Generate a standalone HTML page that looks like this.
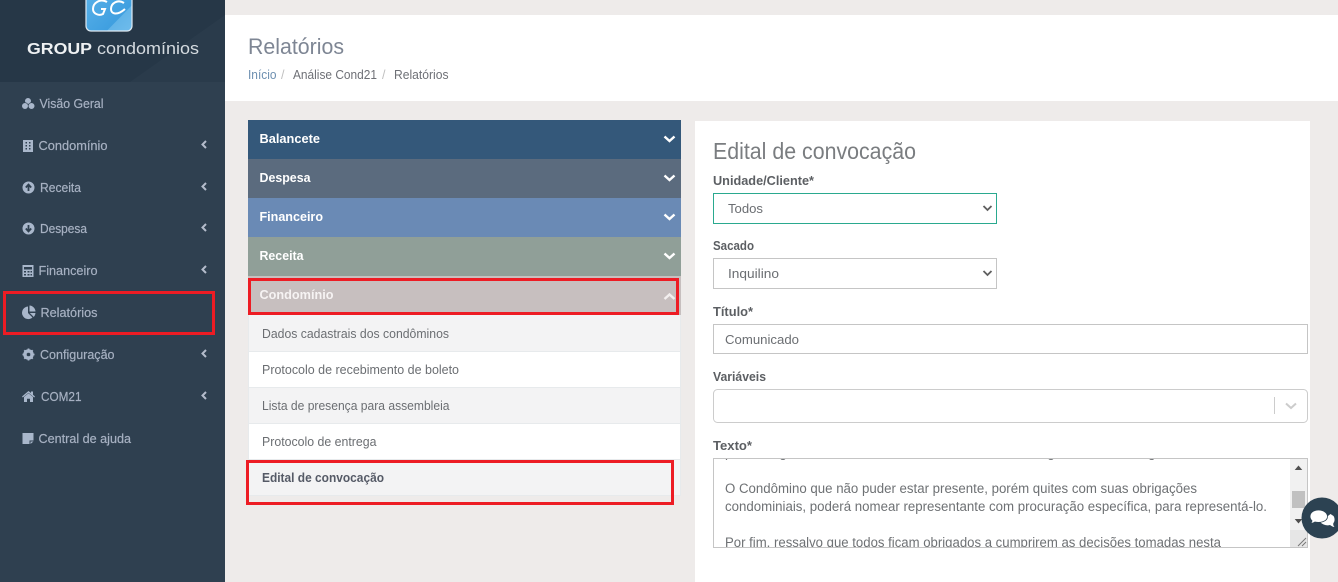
<!DOCTYPE html>
<html lang="pt-BR"><head><meta charset="utf-8"><title>Relatórios</title>
<style>
html,body{margin:0;padding:0;width:1338px;height:582px;overflow:hidden;background:#eeebea}
svg{display:block;position:absolute;left:0;top:0}
text{font-family:"Liberation Sans",sans-serif;font-size:13px;white-space:pre}
.s{fill:#a7b1c2;stroke:#a7b1c2;stroke-width:.2px;font-size:13px}
.h{fill:#fff;font-weight:bold;font-size:13px}
.l{fill:#6b6e72;font-size:13px}
.b{fill:#5c5f63;font-weight:bold;font-size:13px}
.t{fill:#6e7174;font-size:13.5px}
.i{fill:#a9b7cb}
.c{fill:none;stroke:#fff;stroke-width:2.4}
.sc{fill:none;stroke:#b4bccb;stroke-width:2}
.dc{fill:none;stroke:#5f5f5f;stroke-width:1.8}
</style></head><body>
<svg width="1338" height="582" viewBox="0 0 1338 582" xmlns="http://www.w3.org/2000/svg">
<defs>
<linearGradient id="lg" x1="0" y1="0" x2="1" y2="1"><stop offset="0" stop-color="#5db4ea"/><stop offset=".72" stop-color="#3f9fe0"/><stop offset=".73" stop-color="#62b4e8"/><stop offset="1" stop-color="#6fbcec"/></linearGradient>
<clipPath id="ta"><rect x="714" y="459" width="576" height="88"/></clipPath>
</defs>
<!-- sidebar -->
<rect x="0" y="0" width="225" height="582" fill="#2f4050"/>
<rect x="0" y="0" width="225" height="82" fill="#263747"/>
<path d="M130 82L225 15V82Z" fill="#2a3b4b"/>
<rect x="86" y="-16" width="46" height="47" rx="5" fill="url(#lg)" stroke="#dfeaf2" stroke-width="1.2"/>
<path d="M107 2C100-2 93 3 93 9c0 5 6 7 10 5l2-5h-4M124 3c-6-4-13 0-13 6 0 5 6 7 14 0" fill="none" stroke="#fff" stroke-width="2"/>
<text x="27" y="54" textLength="65" lengthAdjust="spacingAndGlyphs" style="font-size:16px;font-weight:bold;fill:#eef1f3">GROUP</text>
<text x="97" y="54" textLength="102" lengthAdjust="spacingAndGlyphs" style="font-size:16.5px;fill:#d5dbe0">condomínios</text>

<g class="i" stroke="#2f4050" stroke-width=".6"><circle cx="28" cy="101" r="3.300"/><circle cx="25" cy="106" r="3.300"/><circle cx="31.500" cy="106" r="3.300"/></g>
<text class="s" x="39.500" y="108" textLength="64" lengthAdjust="spacingAndGlyphs">Visão Geral</text>

<path class="i" d="M23 140h10v12h-10zM25.500 142v1.500h1.500v-1.500zM29 142v1.500h1.500v-1.500zM25.500 145v1.500h1.500v-1.500zM29 145v1.500h1.500v-1.500zM25.500 148v1.500h1.500v-1.500zM29 148v1.500h1.500v-1.500z" fill-rule="evenodd"/>
<text class="s" x="38.500" y="150" textLength="69" lengthAdjust="spacingAndGlyphs">Condomínio</text>

<circle class="i" cx="28.500" cy="187.500" r="6"/><path d="M28.500 191v-6M25.800 187.500l2.700-2.900 2.700 2.900" fill="none" stroke="#2f4050" stroke-width="1.800"/>
<text class="s" x="40" y="192" textLength="41" lengthAdjust="spacingAndGlyphs">Receita</text>

<circle class="i" cx="28.500" cy="228.500" r="6"/><path d="M28.500 225v6M25.800 228.500l2.700 2.900 2.700-2.900" fill="none" stroke="#2f4050" stroke-width="1.800"/>
<text class="s" x="40" y="233" textLength="47" lengthAdjust="spacingAndGlyphs">Despesa</text>

<path class="i" d="M22.500 265h11v12h-11zM24 267v2.500h8v-2.500zM24 271v1.500h2v-1.500zM27.500 271v1.500h2v-1.500zM30.500 271v1.500h1.500v-1.500zM24 274v1.500h2v-1.500zM27.500 274v1.500h2v-1.500zM30.500 274v1.500h1.500v-1.500z" fill-rule="evenodd"/>
<text class="s" x="38.500" y="275" textLength="59" lengthAdjust="spacingAndGlyphs">Financeiro</text>

<path class="i" d="M28 306.500v6.500l4.500 4.500a6.300 6.300 0 1 1-4.500-11zM29.500 305.500a6.500 6.500 0 0 1 6 6h-6zM29.800 313h5.700a6.500 6.500 0 0 1-1.700 4z"/>
<text class="s" x="40.500" y="317" textLength="57" lengthAdjust="spacingAndGlyphs">Relatórios</text>

<circle cx="28.500" cy="354.500" r="4" fill="none" stroke="#a9b7cb" stroke-width="2.600"/><path d="M28.500 348.500v12M22.500 354.500h12M24.300 350.300l8.400 8.400M32.700 350.300l-8.400 8.400" stroke="#a9b7cb" stroke-width="1.800"/><circle cx="28.500" cy="354.500" r="1.800" fill="#2f4050"/>
<text class="s" x="40" y="359" textLength="74.500" lengthAdjust="spacingAndGlyphs">Configuração</text>

<path class="i" d="M22 396.500l6.500-5.500 2.500 2v-1.500h2v3.200l2 1.800-.8 1-5.700-4.800-5.700 4.800zM24 397l4.500-3.700 4.500 3.700v5h-3v-3.200h-3v3.200h-3z"/>
<text class="s" x="41" y="401" textLength="40.500" lengthAdjust="spacingAndGlyphs">COM21</text>

<path class="i" d="M22.500 433h11v7.500h-4v3.500h-7zM30.500 444l3-2.500h-3z"/>
<text class="s" x="38.500" y="443" textLength="92.500" lengthAdjust="spacingAndGlyphs">Central de ajuda</text>

<path class="sc" d="M206 141l-3.500 3.500 3.500 3.500M206 183l-3.500 3.500 3.500 3.500M206 224l-3.500 3.500 3.500 3.500M206 266l-3.500 3.500 3.500 3.500M206 350l-3.500 3.500 3.500 3.500M206 392l-3.500 3.500 3.500 3.500"/>
<rect x="4.500" y="292.500" width="209" height="41" fill="none" stroke="#ed1c24" stroke-width="3"/>

<!-- top header -->
<rect x="225" y="15" width="1113" height="86" fill="#fff"/>
<text x="248" y="54" textLength="96" lengthAdjust="spacingAndGlyphs" style="font-size:22px;fill:#7e8694">Relatórios</text>
<text x="248" y="79" textLength="28.500" lengthAdjust="spacingAndGlyphs" style="fill:#6d8fb0;font-size:12.500px">Início</text>
<text x="281" y="79" style="fill:#c0c0c0;font-size:12.500px">/</text>
<text x="293" y="79" textLength="84" lengthAdjust="spacingAndGlyphs" style="fill:#6e7076;font-size:12.500px">Análise Cond21</text>
<text x="382" y="79" style="fill:#c0c0c0;font-size:12.500px">/</text>
<text x="394" y="79" textLength="54.500" lengthAdjust="spacingAndGlyphs" style="fill:#6e7076;font-size:12.500px">Relatórios</text>

<!-- accordion -->
<rect x="248" y="120" width="433" height="39" fill="#34587a"/>
<rect x="248" y="159" width="433" height="39" fill="#5b6b7e"/>
<rect x="248" y="198" width="433" height="39" fill="#6a8ab5"/>
<rect x="248" y="237" width="433" height="39" fill="#909f98"/>
<rect x="248" y="276" width="433" height="39" fill="#c7bfbf"/>
<text class="h" x="259.500" y="143" textLength="60.500" lengthAdjust="spacingAndGlyphs">Balancete</text>
<text class="h" x="259.500" y="182" textLength="51" lengthAdjust="spacingAndGlyphs">Despesa</text>
<text class="h" x="259.500" y="221" textLength="63.500" lengthAdjust="spacingAndGlyphs">Financeiro</text>
<text class="h" x="259.500" y="260" textLength="44" lengthAdjust="spacingAndGlyphs">Receita</text>
<text class="h" x="259.500" y="299" textLength="74" lengthAdjust="spacingAndGlyphs" style="fill:#f6f3f3">Condomínio</text>
<path class="c" d="M664.500 136.500l5 4.500 5-4.500M664.500 175.500l5 4.500 5-4.500M664.500 214.500l5 4.500 5-4.500M664.500 253.500l5 4.500 5-4.500"/>
<path class="c" style="stroke:#f3efef" d="M664.500 299l5-4.500 5 4.500"/>

<!-- list -->
<rect x="248.500" y="315" width="432" height="181" fill="#fff"/>
<rect x="249" y="315" width="431" height="36" fill="#f3f3f4"/>
<rect x="249" y="387.500" width="431" height="36" fill="#f3f3f4"/>
<rect x="249" y="460" width="431" height="36" fill="#f3f3f4"/>
<path d="M248.500 315v181M680.500 315v181M249 351.500h431M249 387.500h431M249 423.500h431M249 459.500h431M249 495.500h431" stroke="#e7eaec" fill="none"/>
<text class="l" x="262" y="338" textLength="187" lengthAdjust="spacingAndGlyphs">Dados cadastrais dos condôminos</text>
<text class="l" x="262" y="374" textLength="197" lengthAdjust="spacingAndGlyphs">Protocolo de recebimento de boleto</text>
<text class="l" x="262" y="410" textLength="187.500" lengthAdjust="spacingAndGlyphs">Lista de presença para assembleia</text>
<text class="l" x="262" y="446" textLength="114.500" lengthAdjust="spacingAndGlyphs">Protocolo de entrega</text>
<text x="262" y="482" textLength="122" lengthAdjust="spacingAndGlyphs" style="font-weight:bold;fill:#555a66">Edital de convocação</text>
<rect x="247.500" y="461.500" width="425" height="42" fill="none" stroke="#ed1c24" stroke-width="3"/>
<rect x="249.500" y="279.500" width="428" height="34" fill="none" stroke="#ed1c24" stroke-width="3"/>

<!-- form panel -->
<rect x="695" y="121" width="615" height="461" fill="#fff"/>
<text x="713" y="159" textLength="203" lengthAdjust="spacingAndGlyphs" style="font-size:23px;fill:#7a7d80">Edital de convocação</text>

<text class="b" x="713" y="185" textLength="101" lengthAdjust="spacingAndGlyphs">Unidade/Cliente*</text>
<rect x="713.500" y="193.500" width="283" height="30" fill="#fff" stroke="#2aa98f"/>
<text class="l" x="728" y="213" textLength="35" lengthAdjust="spacingAndGlyphs">Todos</text>
<path class="dc" d="M983.500 206l4 4 4-4"/>

<text class="b" x="713" y="250" textLength="41" lengthAdjust="spacingAndGlyphs">Sacado</text>
<rect x="713.500" y="258.500" width="283" height="30" fill="#fff" stroke="#c5c5c5"/>
<text class="l" x="728" y="278" textLength="51" lengthAdjust="spacingAndGlyphs">Inquilino</text>
<path class="dc" d="M983.500 271l4 4 4-4"/>

<text class="b" x="713" y="316" textLength="40" lengthAdjust="spacingAndGlyphs">Título*</text>
<rect x="713.500" y="324.500" width="594" height="29" fill="#fff" stroke="#c5c5c5"/>
<text class="l" x="725" y="344" textLength="74" lengthAdjust="spacingAndGlyphs">Comunicado</text>

<text class="b" x="713" y="381" textLength="53" lengthAdjust="spacingAndGlyphs">Variáveis</text>
<rect x="713.500" y="389.500" width="594" height="33" rx="4" fill="#fff" stroke="#cccccc"/>
<path d="M1274.500 397v17" stroke="#cccccc"/>
<path d="M1286 403.500l5 4.500 5-4.500" fill="none" stroke="#cccccc" stroke-width="2"/>

<text class="b" x="713" y="450" textLength="39" lengthAdjust="spacingAndGlyphs">Texto*</text>
<rect x="713.500" y="458.500" width="594" height="89" fill="#fff" stroke="#c5c5c5"/>
<g clip-path="url(#ta)">
<text class="t" y="457"><tspan x="725">pelo</tspan><tspan x="747" dy="0"> diálogo</tspan><tspan x="880">local,</tspan><tspan x="1033">segundo</tspan><tspan x="1130">longo</tspan></text>
<text class="t" x="725" y="493" textLength="472" lengthAdjust="spacingAndGlyphs">O Condômino que não puder estar presente, porém quites com suas obrigações</text>
<text class="t" x="725" y="511" textLength="542" lengthAdjust="spacingAndGlyphs">condominiais, poderá nomear representante com procuração específica, para representá-lo.</text>
<text class="t" x="725" y="547" textLength="496" lengthAdjust="spacingAndGlyphs">Por fim, ressalvo que todos ficam obrigados a cumprirem as decisões tomadas nesta</text>
</g>
<rect x="1290" y="459" width="17" height="88" fill="#f1f1f1"/>
<rect x="1292" y="491" width="13" height="17" fill="#c1c1c1"/>
<path d="M1298.500 465.500l3.800 4.500h-7.600zM1298.500 523.500l3.800-4.500h-7.600z" fill="#505050"/>
<rect x="1290" y="530" width="17" height="17" fill="#e6e6e6"/>
<path d="M1298 546l8-8M1302 546l4-4" stroke="#777" fill="none"/>

<!-- chat bubble -->
<circle cx="1322" cy="518" r="20.500" fill="#2c4252"/>
<path d="M1320 522c3 3 7 4 10 3 1.500 1 3 2 4.500 2-1-1-1.500-2.500-1.200-3.800 1.800-2 1.500-5.200 .2-7.200l-3-2z" fill="#fff"/>
<path d="M1318.500 510c-5 0-8.500 2.800-8.500 6.500 0 1.800 .8 3.200 2 4.300 0 1-.8 2-1.500 2.700 1.700 0 3.300-.6 4.500-1.500 5 1.200 12.500-.5 12.500-5.500 0-3.700-4-6.500-9-6.500z" fill="#fff" stroke="#2c4252" stroke-width=".8"/>
</svg>
</body></html>
